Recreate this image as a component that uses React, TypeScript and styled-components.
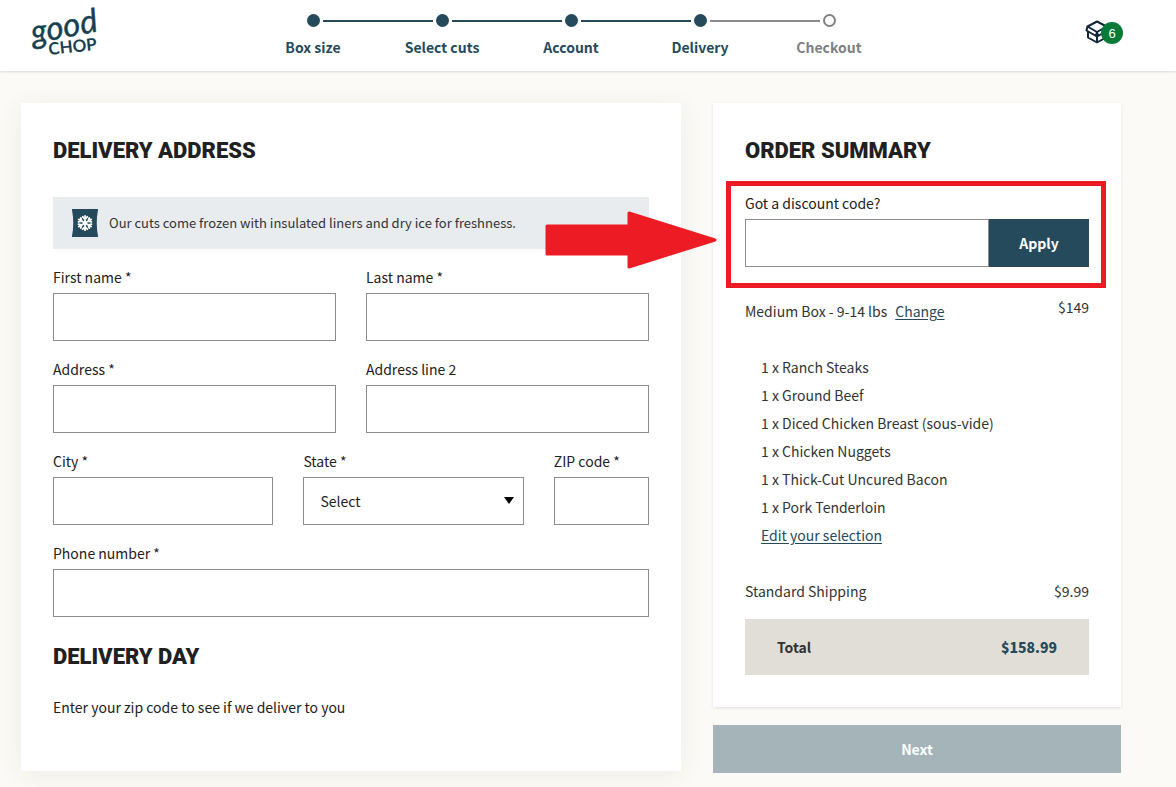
import React from 'react';
import styled, { createGlobalStyle, css } from 'styled-components';

const teal = '#254a5b';
const ink = '#1e2021';
const body = '#333333';
const red = '#ed1c24';

const GlobalStyle = createGlobalStyle`
  *, *::before, *::after { box-sizing: border-box; }
  body {
    margin: 0;
    background: #fbfaf6;
    color: ${ink};
    font-family: "Noto Sans CJK SC", "Open Sans", sans-serif;
    font-size: 14px;
    line-height: 24px;
  }
  button, input, select { font: inherit; border-radius: 0; }
`;

const Header = styled.header`
  display: grid;
  grid-template-columns: 1fr auto 1fr;
  align-items: center;
  height: 71px;
  padding: 0 55px 0 21px;
  background: #fff;
  box-shadow: 0 1px 2px rgba(0, 0, 0, 0.14);
`;

const LogoLink = styled.a`
  display: block;
  width: 72px;
  height: 56px;
  margin: 0 0 8px 8px;
`;

const Steps = styled.ol`
  display: flex;
  margin: 2px 0 0;
  padding: 0;
  list-style: none;
`;

const Step = styled.li<{ $todo?: boolean }>`
  width: 129px;
  text-align: center;
  font-weight: 600;
  color: ${(p) => (p.$todo ? '#808080' : teal)};
`;

const Track = styled.div`
  display: flex;
  align-items: center;
  gap: 3px;
  margin-bottom: 8px;
`;

const Line = styled.span<{ $kind: 'done' | 'todo' | 'none' }>`
  flex: 1;
  height: 2px;
  background: ${(p) => ({ done: teal, todo: '#8c8c8c', none: 'transparent' })[p.$kind]};
`;

const Dot = styled.span<{ $todo?: boolean }>`
  width: 13px;
  height: 13px;
  border: 2px solid ${(p) => (p.$todo ? '#808080' : teal)};
  border-radius: 50%;
  background: ${(p) => (p.$todo ? '#fff' : teal)};
`;

const CartButton = styled.button`
  position: relative;
  justify-self: end;
  width: 36px;
  height: 24px;
  margin-bottom: 8px;
  padding: 0;
  border: 0;
  background: none;
  text-align: left;
  cursor: pointer;

  svg { display: block; }
`;

const Badge = styled.span`
  position: absolute;
  top: 2px;
  right: -2px;
  width: 22px;
  height: 22px;
  border-radius: 50%;
  background: #067a36;
  color: #fff;
  font-family: "Liberation Sans", sans-serif;
  font-size: 13px;
  line-height: 24px;
  text-align: center;
`;

const Main = styled.main`
  display: grid;
  grid-template-columns: minmax(0, 55fr) minmax(0, 34fr);
  gap: 32px;
  align-items: start;
  padding: 32px 55px 14px 21px;
`;

const FormCard = styled.form`
  padding: 32px 32px 52px;
  background: #fff;
  box-shadow: 0 4px 24px rgba(60, 60, 30, 0.07);
`;

const SummaryCard = styled.section`
  padding: 32px;
  background: #fff;
  box-shadow: 0 1px 3px rgba(0, 0, 0, 0.1);
`;

const Heading = styled.h2`
  margin: 0;
  font-family: Roboto, "Liberation Sans", sans-serif;
  font-size: 22px;
  font-weight: 900;
  line-height: 32px;
  text-transform: uppercase;
`;

const Notice = styled.p`
  display: flex;
  align-items: center;
  gap: 11px;
  height: 52px;
  margin: 30px 0 16px;
  padding: 0 19px;
  background: #e8ecef;
  color: ${body};
  font-size: 13px;
`;

const Fields = styled.div`
  display: grid;
  gap: 16px;
  margin-bottom: 24px;
`;

const FieldRow = styled.div<{ $columns: string }>`
  display: grid;
  grid-template-columns: ${(p) => p.$columns};
  gap: 30px;
`;

const Label = styled.label`
  display: block;
  margin-bottom: 4px;
`;

const control = css`
  display: block;
  width: 100%;
  min-width: 0;
  height: 48px;
  padding: 0 16px;
  border: 1px solid #8c8c8c;
  background: #fff;
  color: ${ink};
`;

const Input = styled.input`
  ${control}
`;

const SelectWrap = styled.div`
  position: relative;

  svg {
    position: absolute;
    top: 20px;
    right: 10px;
    pointer-events: none;
  }
`;

const Select = styled.select`
  ${control}
  appearance: none;
`;

const DayText = styled.p`
  margin: 22px 0 0;
`;

const Discount = styled.div`
  position: relative;
  margin: 24px 0 28px;
`;

const DiscountRow = styled.div`
  display: flex;
`;

const ApplyButton = styled.button`
  flex: none;
  width: 100px;
  height: 48px;
  border: 0;
  background: ${teal};
  color: #fff;
  font-weight: 700;
`;

const Highlight = styled.div`
  position: absolute;
  inset: -10px -17px -21px -19px;
  border: 5px solid ${red};
  pointer-events: none;
`;

const Arrow = styled.svg`
  position: absolute;
  top: 20px;
  right: calc(100% + 28px);
  pointer-events: none;
`;

const PriceRow = styled.div`
  display: flex;
  justify-content: space-between;
  color: ${body};
`;

const BoxName = styled.span`
  line-height: 32px;
`;

const Link = styled.a`
  color: ${teal};
  text-decoration: underline;
  text-underline-offset: 2px;
`;

const ChangeLink = styled(Link)`
  margin-left: 8px;
`;

const Items = styled.ul`
  margin: 26px 0 30px;
  padding: 0 0 0 16px;
  list-style: none;
  color: ${body};
  line-height: 28px;
`;

const Total = styled(PriceRow)`
  margin-top: 16px;
  padding: 16px 32px;
  background: #e1ded8;
  font-weight: 700;

  strong { color: ${teal}; }
`;

const NextButton = styled.button`
  width: 100%;
  height: 48px;
  margin-top: 18px;
  border: 0;
  background: #a5b4b9;
  color: #fff;
  font-weight: 700;
`;

const steps = ['Box size', 'Select cuts', 'Account', 'Delivery', 'Checkout'];

const items = [
  'Ranch Steaks',
  'Ground Beef',
  'Diced Chicken Breast (sous-vide)',
  'Chicken Nuggets',
  'Thick-Cut Uncured Bacon',
  'Pork Tenderloin',
];

const Logo = () => (
  <svg width="72" height="56" viewBox="0 0 72 56" fill="#163f50" overflow="visible" role="img" aria-label="Good Chop">
    <text x="4" y="40" transform="rotate(-11 4 40)" fontFamily="Lato, sans-serif" fontStyle="italic" fontWeight="400" fontSize="33" stroke="#163f50" strokeWidth="0.4">good</text>
    <text x="20" y="51" transform="rotate(-6 20 51)" fontFamily="Lato, sans-serif" fontWeight="700" fontSize="17">CHOP</text>
  </svg>
);

const BoxIcon = () => (
  <svg width="24" height="24" viewBox="0 0 24 24" fill="none" stroke="#12263a" strokeWidth="2" strokeLinejoin="round">
    <path d="M12 1.500 2.500 6.500 12 12 21.500 6.500Z" />
    <path d="M2.500 6.500 1.500 10.500 11 16 12 12 13 16 22.500 10.500" />
    <path d="M3 11v6.500l9 5 9-5V11M12 12v10.500" />
  </svg>
);

const FrozenIcon = () => (
  <svg width="26" height="28" viewBox="0 0 26 28" aria-hidden="true">
    <path d="M0 0H26V1Q23.500 14 26 27V28H0V27Q2.500 14 0 1Z" fill={teal} />
    <g stroke="#fff" strokeWidth="1.8" fill="none" strokeLinecap="round">
      {[0, 60, 120, 180, 240, 300].map((angle) => (
        <path key={angle} transform={`rotate(${angle} 13 14)`} d="M13 14V6.800M10.700 7.800 13 10.200 15.300 7.800" />
      ))}
    </g>
  </svg>
);

const Field = ({ id, label }: { id: string; label: string }) => (
  <div>
    <Label htmlFor={id}>{label}</Label>
    <Input id={id} name={id} type="text" />
  </div>
);

export default function App() {
  const current = 3;
  return (
    <>
      <GlobalStyle />
      <Header>
        <LogoLink href="#home"><Logo /></LogoLink>
        <Steps>
          {steps.map((name, i) => (
            <Step key={name} $todo={i > current}>
              <Track>
                <Line $kind={i === 0 ? 'none' : i > current ? 'todo' : 'done'} />
                <Dot $todo={i > current} />
                <Line $kind={i === steps.length - 1 ? 'none' : i >= current ? 'todo' : 'done'} />
              </Track>
              {name}
            </Step>
          ))}
        </Steps>
        <CartButton type="button" aria-label="Cart, 6 items">
          <BoxIcon />
          <Badge>6</Badge>
        </CartButton>
      </Header>
      <Main>
        <FormCard>
          <Heading>Delivery address</Heading>
          <Notice>
            <FrozenIcon />
            <span>Our cuts come frozen with insulated liners and dry ice for freshness.</span>
          </Notice>
          <Fields>
            <FieldRow $columns="1fr 1fr">
              <Field id="first-name" label="First name *" />
              <Field id="last-name" label="Last name *" />
            </FieldRow>
            <FieldRow $columns="1fr 1fr">
              <Field id="address" label="Address *" />
              <Field id="address-2" label="Address line 2" />
            </FieldRow>
            <FieldRow $columns="44fr 44fr 19fr">
              <Field id="city" label="City *" />
              <div>
                <Label htmlFor="state">State *</Label>
                <SelectWrap>
                  <Select id="state" name="state" defaultValue="">
                    <option value="">Select</option>
                  </Select>
                  <svg width="10" height="7" viewBox="0 0 10 7" aria-hidden="true">
                    <path d="M0 0H10L5 7Z" fill="#000" />
                  </svg>
                </SelectWrap>
              </div>
              <Field id="zip" label="ZIP code *" />
            </FieldRow>
            <Field id="phone" label="Phone number *" />
          </Fields>
          <Heading>Delivery day</Heading>
          <DayText>Enter your zip code to see if we deliver to you</DayText>
        </FormCard>
        <aside>
          <SummaryCard>
            <Heading>Order summary</Heading>
            <Discount>
              <Label htmlFor="discount">Got a discount code?</Label>
              <DiscountRow>
                <Input id="discount" name="discount" type="text" />
                <ApplyButton type="button">Apply</ApplyButton>
              </DiscountRow>
              <Highlight />
              <Arrow width="172" height="58" viewBox="0 0 172 58" aria-hidden="true">
                <path
                  d="M2 15H84V2L170 29 84 56V43H2Z"
                  fill={red}
                  stroke={red}
                  strokeWidth="3"
                  strokeLinejoin="round"
                />
              </Arrow>
            </Discount>
            <PriceRow>
              <BoxName>
                Medium Box - 9-14 lbs
                <ChangeLink href="#change">Change</ChangeLink>
              </BoxName>
              <span>$149</span>
            </PriceRow>
            <Items>
              {items.map((item) => (
                <li key={item}>1 x {item}</li>
              ))}
              <li><Link href="#edit">Edit your selection</Link></li>
            </Items>
            <PriceRow>
              <span>Standard Shipping</span>
              <span>$9.99</span>
            </PriceRow>
            <Total>
              <span>Total</span>
              <strong>$158.99</strong>
            </Total>
          </SummaryCard>
          <NextButton type="button">Next</NextButton>
        </aside>
      </Main>
    </>
  );
}
